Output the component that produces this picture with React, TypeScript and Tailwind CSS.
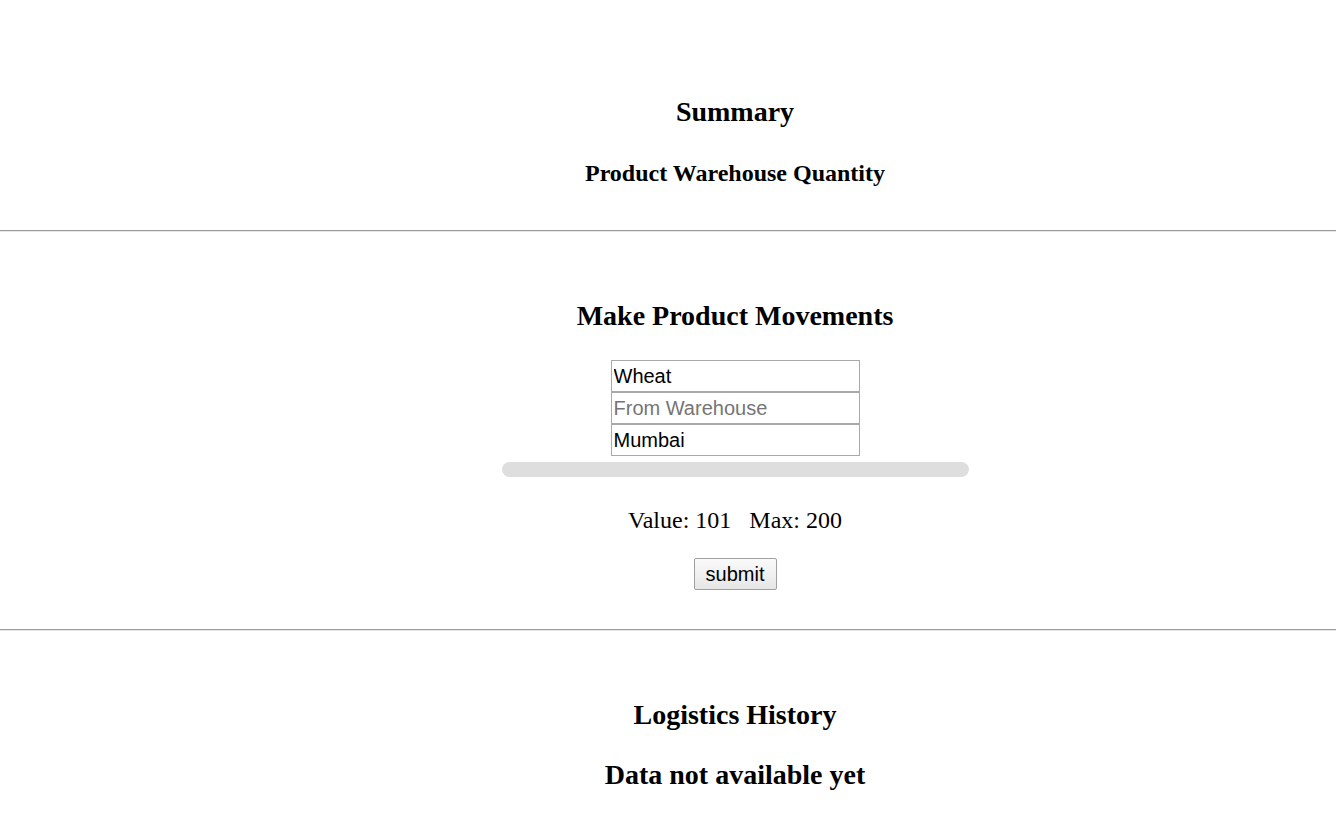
export default function App() {
  const serif = { fontFamily: '"Liberation Serif", "Times New Roman", serif' };

  return (
    <div className="min-h-[815px] bg-white text-black" style={serif}>
      <section className="flex flex-col items-center pl-[134px]">
        <h2 className="mt-[96px] text-[28px] font-bold leading-[32px]">Summary</h2>
        <h3 className="mt-[31px] text-[24px] font-bold leading-[28px]">Product Warehouse Quantity</h3>
      </section>

      <hr className="mt-[43px] h-0 border-0 border-t border-b border-t-[#9a9a9a] border-b-[#e8e8e8]" />

      <section className="flex flex-col items-center pl-[134px]">
        <h2 className="mt-[68px] text-[28px] font-bold leading-[32px]">Make Product Movements</h2>
        <form className="mt-[28px] flex flex-col items-center" onSubmit={(e) => e.preventDefault()}>
          <div className="flex flex-col font-['Liberation_Sans',Arial,sans-serif]">
            <input
              defaultValue="Wheat"
              className="h-[32px] w-[249px] border border-[#a9a9a9] px-[2px] text-[20px] text-black outline-none"
            />
            <input
              placeholder="From Warehouse"
              className="h-[32px] w-[249px] border border-[#a9a9a9] px-[2px] text-[20px] text-black outline-none placeholder:text-[#757575]"
            />
            <input
              defaultValue="Mumbai"
              className="h-[32px] w-[249px] border border-[#a9a9a9] px-[2px] text-[20px] text-black outline-none"
            />
          </div>
          <div className="mt-[6px] h-[15px] w-[467px] rounded-full bg-[#dedede]" />
          <p className="mt-[29px] text-[24px] leading-[28px]">
            Value: 101&nbsp;&nbsp;&nbsp;Max: 200
          </p>
          <button
            type="submit"
            className="mt-[24px] h-[32px] w-[83px] rounded-[2px] border border-[#a0a0a0] bg-gradient-to-b from-[#fafafa] to-[#e6e6e6] text-[20px] font-['Liberation_Sans',Arial,sans-serif] text-black"
          >
            submit
          </button>
        </form>
      </section>

      <hr className="mt-[39px] h-0 border-0 border-t border-b border-t-[#9a9a9a] border-b-[#e8e8e8]" />

      <section className="flex flex-col items-center pl-[134px]">
        <h2 className="mt-[68px] text-[28px] font-bold leading-[32px]">Logistics History</h2>
        <h2 className="mt-[28px] text-[28px] font-bold leading-[32px]">Data not available yet</h2>
      </section>
    </div>
  );
}
